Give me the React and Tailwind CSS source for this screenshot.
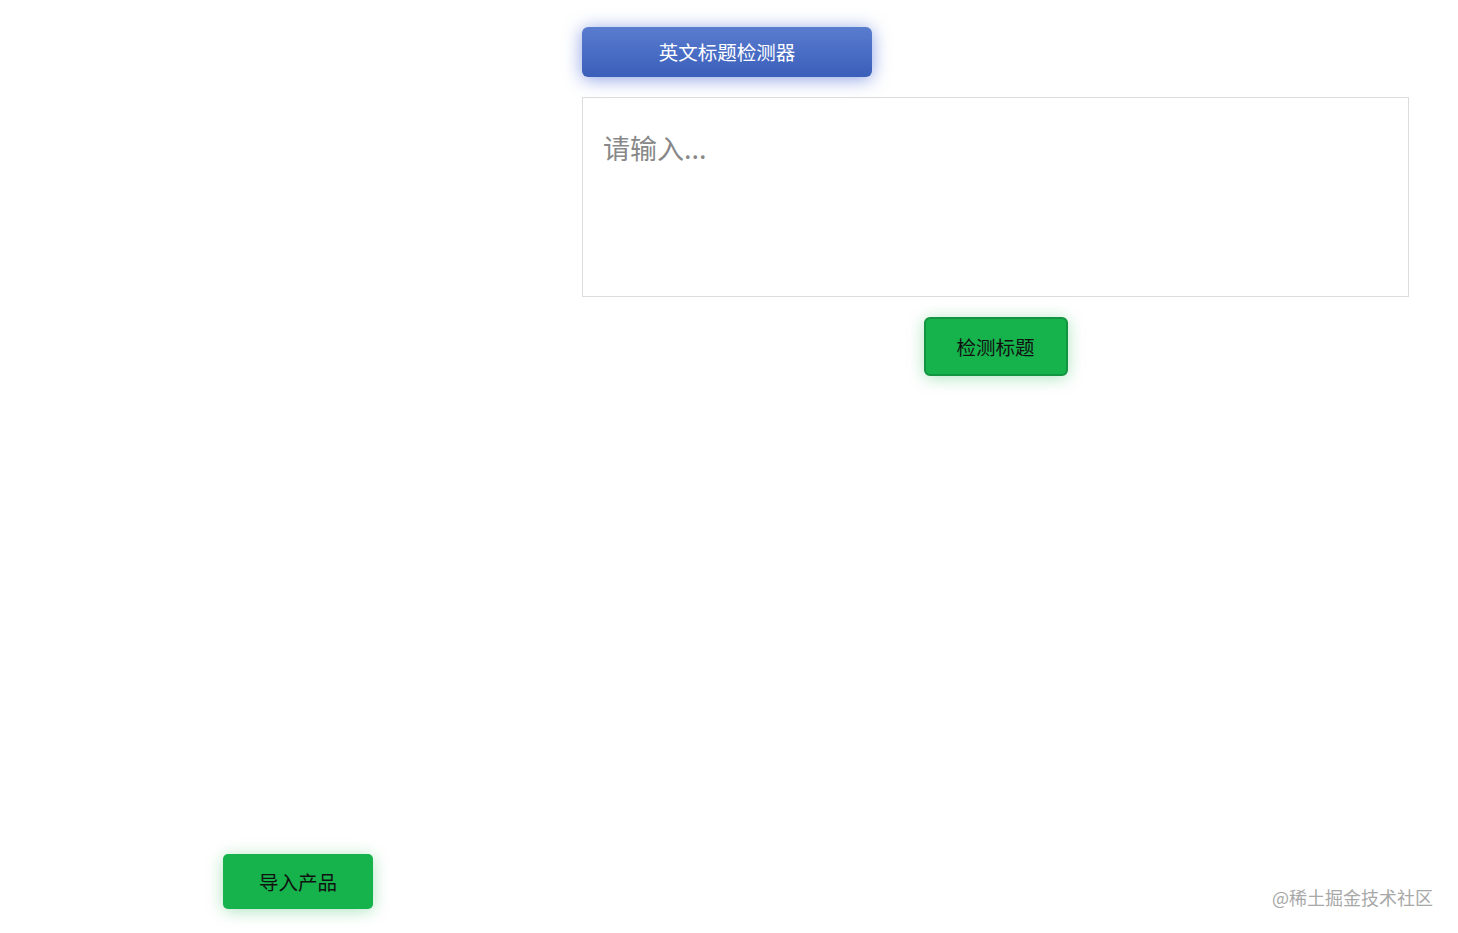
import { useState } from 'react'

export default function App() {
  const [title, setTitle] = useState('')

  return (
    <div
      className="relative flex h-screen w-full bg-white"
      style={{ fontFamily: '"Noto Sans CJK SC", "Noto Sans", sans-serif' }}
    >
      {/* Left column */}
      <div className="flex w-[582px] flex-col justify-end pb-[24px] pl-[223px]">
        <button className="h-[55px] w-[150px] rounded-[5px] bg-[#16b24b] text-[19.5px] text-[#111] shadow-[0_2px_16px_rgba(22,178,75,0.35)]">
          导入产品
        </button>
      </div>

      {/* Main column */}
      <div className="flex w-[827px] flex-col pt-[27px]">
        <button className="h-[50px] w-[290px] rounded-[6px] bg-gradient-to-b from-[#5a7ccf] to-[#3a5fba] text-[19.5px] text-white shadow-[0_2px_18px_rgba(60,95,210,0.6)]">
          英文标题检测器
        </button>

        <textarea
          value={title}
          onChange={(e) => setTitle(e.target.value)}
          placeholder="请输入..."
          className="mt-[20px] h-[200px] w-full resize-none border border-[#dcdcdc] px-[20px] py-[31px] text-[27px] leading-[38px] text-[#333] outline-none placeholder:text-[#888]"
        />

        <button className="mx-auto mt-[20px] h-[59px] w-[144px] rounded-[6px] border-2 border-[#129440] bg-[#16b24b] text-[19.5px] text-[#111] shadow-[0_2px_16px_rgba(22,178,75,0.35)]">
          检测标题
        </button>
      </div>

      {/* Watermark */}
      <div className="absolute bottom-[22px] right-[25px] text-[18px] text-[#a8a8a8]">
        @稀土掘金技术社区
      </div>
    </div>
  )
}
